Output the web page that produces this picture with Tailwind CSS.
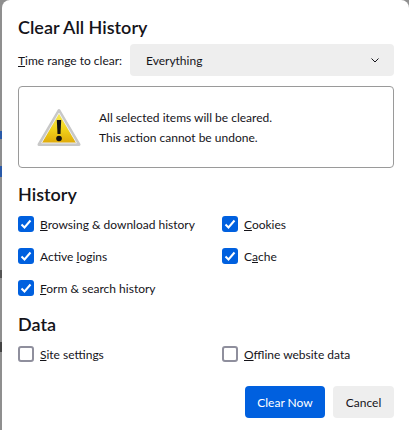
<!DOCTYPE html>
<html>
<head>
<script src="https://cdn.jsdelivr.net/npm/@tailwindcss/browser@4"></script>
</head>
<body class="relative w-[409px] h-[430px] overflow-hidden bg-[#8f8f8f] text-[#15141a] font-['Lato',sans-serif]">
<span class="absolute left-0 top-[131px] w-[2px] h-[8px] bg-[#2a5aa8]"></span>
<span class="absolute left-0 top-[166px] w-[2px] h-[11px] bg-[#2a5aa8]"></span>
<span class="absolute left-0 top-[270px] w-[2px] h-[8px] bg-[#555555]"></span>
<span class="absolute left-0 top-[342px] w-[2px] h-[10px] bg-[#444444]"></span>
<main class="ml-[2px] w-[407px] h-[430px] bg-white rounded-t-[8px] pl-4 pr-[15px] pt-[14px] flex flex-col">
  <h1 class="text-[18px] leading-[26px] font-semibold">Clear All History</h1>
  <div class="flex items-center mt-[4px] h-[32px]">
    <label class="w-[112px] shrink-0 whitespace-nowrap text-[12px] leading-[18px] pt-[2px]"><u>T</u>ime range to clear:</label>
    <div class="flex-1 h-[32px] rounded bg-[#eeeeee] flex items-center justify-between pl-4 pr-[15px]">
      <span class="text-[12px] pt-[2px]">Everything</span>
      <svg width="8" height="5" viewBox="0 0 8 5" fill="none" stroke="#15141a" stroke-width="1"><path d="M0.500 0.500L4 4 7.500 0.500"/></svg>
    </div>
  </div>
  <div class="mt-[10px] h-[82px] border border-[#9a9a9a] rounded flex items-center">
    <svg class="ml-[18px] shrink-0" width="44" height="39" viewBox="0 0 44 39">
      <defs><linearGradient id="g" x1="0" y1="0" x2="0" y2="1"><stop offset="0" stop-color="#f8ec5a"/><stop offset="0.55" stop-color="#f0d21a"/><stop offset="1" stop-color="#dfa90a"/></linearGradient></defs>
      <path d="M22 2.500L42 36.500H2Z" fill="#c8c8c8" stroke="#c8c8c8" stroke-width="3" stroke-linejoin="round"/>
      <path d="M22 5L39.500 35H4.500Z" fill="url(#g)" stroke="#eeeeee" stroke-width="1" stroke-linejoin="round"/>
      <path d="M19.800 12h4.400l-.7 14h-3z" fill="#111"/>
      <circle cx="22" cy="30.500" r="2.800" fill="#111"/>
    </svg>
    <div class="ml-[18px] text-[12px] leading-[20px] pt-[2px]"><p>All selected items will be cleared.</p><p>This action cannot be undone.</p></div>
  </div>
  <h2 class="mt-[14px] text-[18px] leading-[24px] font-semibold">History</h2>
  <div class="mt-[10px] grid grid-cols-[204px_1fr] gap-y-[16px] text-[12px] leading-[14px]">
    <div class="flex items-center gap-[6px]"><span class="w-4 h-4 rounded-[3px] bg-[#0060df] flex items-center justify-center"><svg width="12" height="12" viewBox="0 0 12 12" fill="none" stroke="#fff" stroke-width="2"><path d="M1.500 6.500L4.500 9.500 10.500 2.500"/></svg></span><span class="pt-[2px]"><u>B</u>rowsing &amp; download history</span></div>
    <div class="flex items-center gap-[6px]"><span class="w-4 h-4 rounded-[3px] bg-[#0060df] flex items-center justify-center"><svg width="12" height="12" viewBox="0 0 12 12" fill="none" stroke="#fff" stroke-width="2"><path d="M1.500 6.500L4.500 9.500 10.500 2.500"/></svg></span><span class="pt-[2px]"><u>C</u>ookies</span></div>
    <div class="flex items-center gap-[6px]"><span class="w-4 h-4 rounded-[3px] bg-[#0060df] flex items-center justify-center"><svg width="12" height="12" viewBox="0 0 12 12" fill="none" stroke="#fff" stroke-width="2"><path d="M1.500 6.500L4.500 9.500 10.500 2.500"/></svg></span><span class="pt-[2px]">Active <u>l</u>ogins</span></div>
    <div class="flex items-center gap-[6px]"><span class="w-4 h-4 rounded-[3px] bg-[#0060df] flex items-center justify-center"><svg width="12" height="12" viewBox="0 0 12 12" fill="none" stroke="#fff" stroke-width="2"><path d="M1.500 6.500L4.500 9.500 10.500 2.500"/></svg></span><span class="pt-[2px]">C<u>a</u>che</span></div>
    <div class="flex items-center gap-[6px]"><span class="w-4 h-4 rounded-[3px] bg-[#0060df] flex items-center justify-center"><svg width="12" height="12" viewBox="0 0 12 12" fill="none" stroke="#fff" stroke-width="2"><path d="M1.500 6.500L4.500 9.500 10.500 2.500"/></svg></span><span class="pt-[2px]"><u>F</u>orm &amp; search history</span></div>
  </div>
  <h2 class="mt-[16px] text-[18px] leading-[24px] font-semibold">Data</h2>
  <div class="mt-[10px] grid grid-cols-[204px_1fr] text-[12px] leading-[14px]">
    <div class="flex items-center gap-[6px]"><span class="w-4 h-4 rounded-[3px] border-2 border-[#8f8f9d]"></span><span class="pt-[2px]"><u>S</u>ite settings</span></div>
    <div class="flex items-center gap-[6px]"><span class="w-4 h-4 rounded-[3px] border-2 border-[#8f8f9d]"></span><span class="pt-[2px]"><u>O</u>ffline website data</span></div>
  </div>
  <div class="mt-[24px] flex justify-end gap-2">
    <button class="w-[80px] h-[32px] pt-[2px] rounded bg-[#0060df] text-white text-[12px]">Clear Now</button>
    <button class="w-[61px] h-[32px] pt-[2px] rounded bg-[#eeeeee] text-[12px]">Cancel</button>
  </div>
</main>
</body>
</html>
